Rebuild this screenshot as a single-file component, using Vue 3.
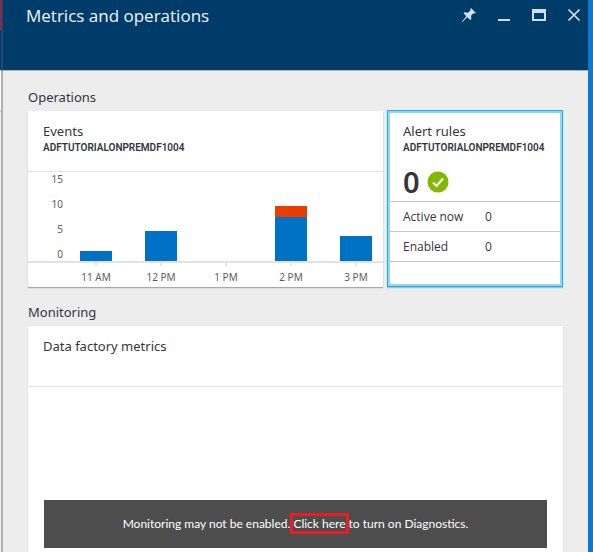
<script setup>
const baseline = 89
const bars = [
  { label: '11 AM', ok: 10, failed: 0 },
  { label: '12 PM', ok: 30, failed: 0 },
  { label: '1 PM', ok: 0, failed: 0 },
  { label: '2 PM', ok: 44, failed: 11 },
  { label: '3 PM', ok: 25, failed: 0 },
].map((b, i) => ({ ...b, x: 68 + i * 65 }))
const ticks = [15, 10, 5, 0].map((value, i) => ({ value, y: 11 + i * 25 }))
const rules = [
  { name: 'Active now', count: 0 },
  { name: 'Enabled', count: 0 },
]
</script>

<template>
  <div class="page">
    <div class="previous" aria-hidden="true">
      <div class="previous-alert"></div>
      <div class="previous-head"></div>
      <div class="previous-top"></div>
      <div class="previous-body"></div>
    </div>
    <main class="blade">
      <header class="head">
        <h1>Metrics and operations</h1>
        <div class="controls">
          <button type="button" aria-label="Pin">
            <svg width="16" height="16" viewBox="0 0 16 16">
              <path fill="currentColor" d="M10 1 L15 6 L13.600 6.500 L12.500 6.200 L10 8.700 L10.300 12 L9.300 13 L6.200 10.200 L1.500 15 L1 14.500 L5.300 9.300 L2.500 6.300 L3.500 5.300 L7 5.800 L9.600 3.200 L9.300 2 Z" />
            </svg>
          </button>
          <button type="button" aria-label="Minimize">
            <svg width="16" height="16" viewBox="0 0 16 16"><path fill="currentColor" d="M2 12h12v2H2z" /></svg>
          </button>
          <button type="button" aria-label="Maximize">
            <svg width="16" height="16" viewBox="0 0 16 16"><path fill="currentColor" fill-rule="evenodd" d="M1 2h14v12H1zM3 6v6h10V6z" /></svg>
          </button>
          <button type="button" aria-label="Close">
            <svg width="16" height="16" viewBox="0 0 16 16"><path fill="none" stroke="currentColor" stroke-width="1.700" d="M2.500 2.500l11 11M13.500 2.500l-11 11" /></svg>
          </button>
        </div>
      </header>

      <div class="content">
        <h2>Operations</h2>
        <div class="tiles">
          <section class="card events">
            <div class="card-head">
              <h3>Events</h3>
              <p class="resource">ADFTUTORIALONPREMDF1004</p>
            </div>
            <svg class="chart" viewBox="0 0 355 115" role="img" aria-label="Events per hour">
              <text v-for="t in ticks" :key="t.value" class="tick" x="35" :y="t.y" text-anchor="end">{{ t.value }}</text>
              <rect class="axis" x="0" :y="baseline" width="355" height="2" />
              <g v-for="b in bars" :key="b.label">
                <rect class="axis" :x="b.x - 1" :y="baseline" width="2" height="5" />
                <rect v-if="b.ok" class="ok" :x="b.x - 16" :y="baseline - b.ok" width="32" :height="b.ok" />
                <rect v-if="b.failed" class="failed" :x="b.x - 16" :y="baseline - b.ok - b.failed" width="32" :height="b.failed" />
                <text class="tick" :x="b.x" y="109" text-anchor="middle">{{ b.label }}</text>
              </g>
            </svg>
          </section>

          <section class="card alerts">
            <div class="alerts-head">
              <h3>Alert rules</h3>
              <p class="resource">ADFTUTORIALONPREMDF1004</p>
              <div class="status">
                <span class="total">0</span>
                <svg width="22" height="22" viewBox="0 0 22 22" role="img" aria-label="Healthy">
                  <circle cx="11" cy="11" r="10.500" fill="#7fba00" />
                  <path d="M6 11.500l3.600 3.500L16 7.500" fill="none" stroke="#fff" stroke-width="2.200" />
                </svg>
              </div>
            </div>
            <table>
              <tbody>
                <tr v-for="r in rules" :key="r.name">
                  <th scope="row">{{ r.name }}</th>
                  <td>{{ r.count }}</td>
                </tr>
              </tbody>
            </table>
          </section>
        </div>

        <h2 class="second">Monitoring</h2>
        <section class="card metrics">
          <div class="card-head"><h3>Data factory metrics</h3></div>
          <div class="empty">
            <p class="banner">Monitoring may not be enabled. <a href="#diagnostics">Click here</a> to turn on Diagnostics.</p>
          </div>
        </section>
      </div>
    </main>
  </div>
</template>

<style>
body {
  margin: 0;
}
</style>

<style scoped>
.page {
  display: flex;
  height: 100vh;
  overflow: hidden;
  box-sizing: border-box;
  border-right: 5px solid #1177c9;
  background: #ededed;
  color: #32363d;
  font-family: "Segoe UI", "Noto Sans", "Open Sans", sans-serif;
}
h1, h2, h3, p {
  margin: 0;
  font-weight: 400;
}
.previous {
  display: flex;
  flex-direction: column;
  flex: 0 0 1px;
}
.previous-alert {
  height: 30px;
  background: #d81118;
}
.previous-head {
  height: 40px;
  background: #003c6a;
}
.previous-top {
  height: 41px;
  background: #fff;
  border-bottom: 1px solid #b0b0b0;
}
.previous-body {
  flex: 1;
  background: #ededed;
}
.blade {
  display: flex;
  flex-direction: column;
  flex: 1;
  min-width: 0;
  border-left: 2px solid #b0b0b0;
}
.head {
  display: flex;
  justify-content: space-between;
  align-items: flex-start;
  box-sizing: border-box;
  flex: 0 0 71px;
  margin-left: -2px;
  padding: 4px 6px 0 23px;
  border-left: 2px solid #1b4d78;
  border-bottom: 1px solid #b0b0b0;
  background: #003c6a;
}
h1 {
  color: #f2f6f9;
  font-family: "Segoe UI", "Open Sans", sans-serif;
  font-size: 17px;
  line-height: 24px;
}
.controls {
  display: flex;
  gap: 19px;
  padding-top: 3px;
}
.controls button {
  display: block;
  width: 16px;
  height: 16px;
  padding: 0;
  border: 0;
  background: none;
  color: #d3dfe8;
}
.controls svg {
  display: block;
}
.content {
  display: flex;
  flex-direction: column;
  flex: 1;
  padding: 16px 25px 0;
}
h2 {
  font-size: 13px;
  line-height: 20px;
}
h3 {
  font-size: 13px;
  line-height: 20px;
}
.second {
  margin-top: 15px;
}
.tiles {
  display: grid;
  grid-template-columns: minmax(0, 355fr) minmax(0, 176fr);
  gap: 4px;
  margin-top: 3px;
}
.card {
  box-sizing: border-box;
  background: #fff;
  box-shadow: 0 0 1px #c8c8c8;
}
.events {
  margin-top: 1px;
  box-shadow: 0 1px 1px #a8a8a8;
}
.card-head {
  box-sizing: border-box;
  height: 61px;
  padding: 10px 15px 0;
  border-bottom: 1px solid #e3e3e3;
}
.resource {
  font-family: "Segoe UI", Roboto, sans-serif;
  font-size: 10px;
  font-weight: 600;
  line-height: 14px;
}
.chart {
  display: block;
  width: 100%;
}
.tick {
  fill: #5a5d63;
  font-size: 10px;
}
.axis {
  fill: #e3e3e3;
}
.ok {
  fill: #0072c6;
}
.failed {
  fill: #eb3c00;
}
.alerts {
  border: 1px solid #00bcf2;
  box-shadow: inset 0 0 0 2px #9bd2ef, 0 1px 1px #b8b8b8;
  padding: 2px;
}
.alerts-head {
  box-sizing: border-box;
  height: 88px;
  padding: 8px 13px 0;
}
.status {
  display: flex;
  align-items: center;
  gap: 7px;
  padding-top: 10px;
}
.total {
  font-size: 29px;
  font-weight: 600;
  line-height: 34px;
}
table {
  width: 100%;
  table-layout: fixed;
  border-collapse: collapse;
  border-bottom: 1px solid #c8c8c8;
  font-family: "Segoe UI", "Open Sans", sans-serif;
  font-size: 12px;
  line-height: 20px;
}
tr {
  height: 30px;
  border-top: 1px solid #c8c8c8;
}
th {
  width: 95px;
  padding: 0 0 0 13px;
  font-weight: 400;
  text-align: left;
  box-sizing: border-box;
}
td {
  padding: 0;
}
.metrics {
  display: flex;
  flex-direction: column;
  flex: 1;
  margin-top: 4px;
}
.empty {
  display: flex;
  flex-direction: column;
  justify-content: flex-end;
  flex: 1;
  padding: 0 16px 4px;
}
.banner {
  padding: 14px 0;
  background: #4d4d4d;
  color: #fff;
  font-family: "Segoe UI", Lato, sans-serif;
  font-size: 12px;
  line-height: 20px;
  text-align: center;
}
.banner a {
  color: inherit;
  text-decoration: none;
  outline: 3px solid #ed1c24;
}
</style>
